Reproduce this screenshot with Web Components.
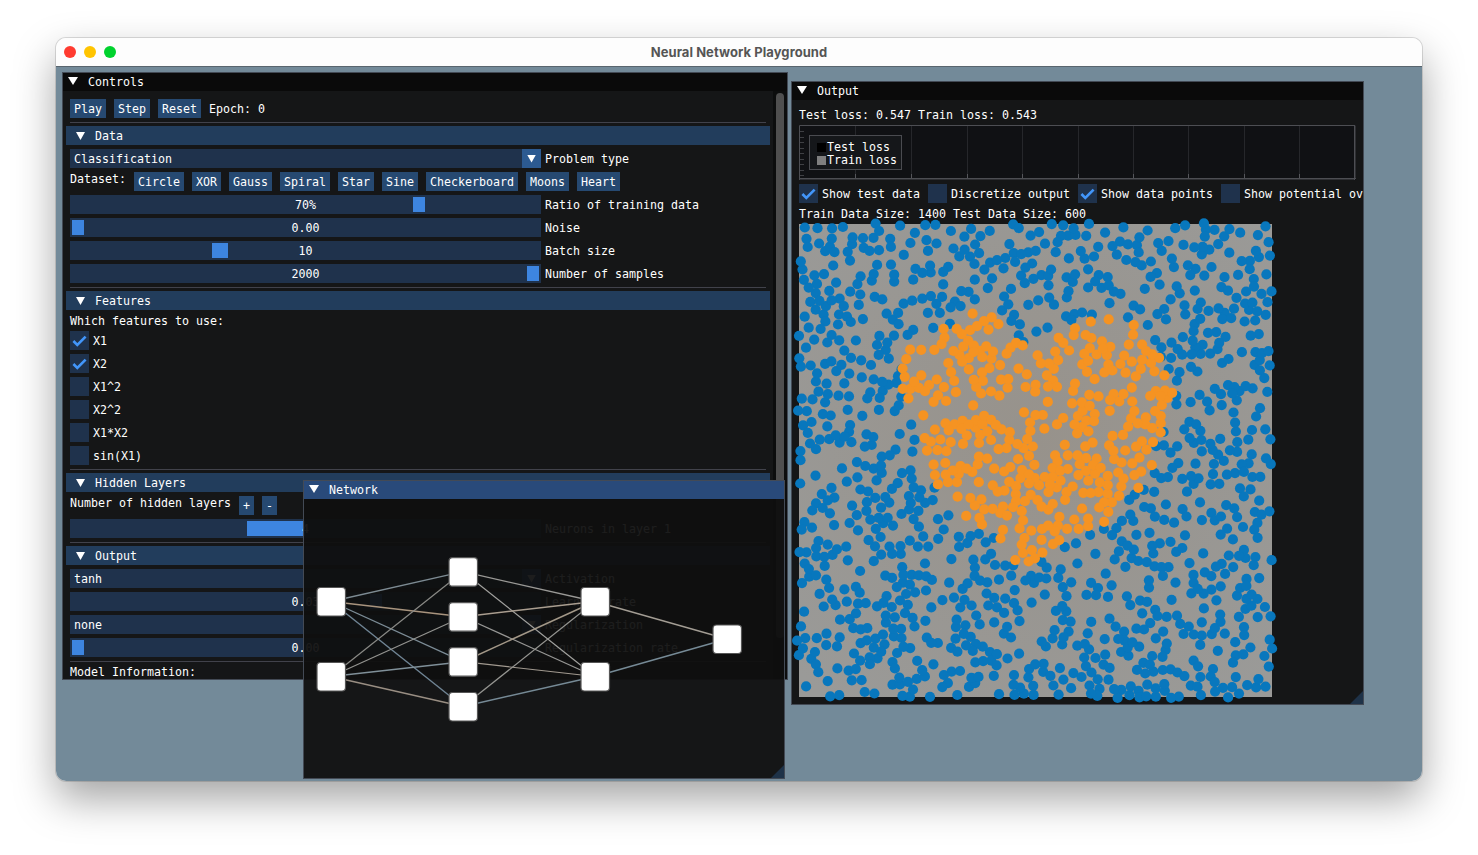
<!DOCTYPE html>
<html>
<head>
<meta charset="utf-8">
<title>Neural Network Playground</title>
<style>
  html, body { margin: 0; padding: 0; background: #fff; }
  body {
    height: 855px;
    overflow: hidden;
    padding: 38px 0 0 56px;
    box-sizing: border-box;
    font: 11.63px/13px "DejaVu Sans Mono", monospace;
    color: #fff;
  }
  /* plain text lines between the widgets: 13px tall, glyphs sit 1px low */
  span { display: block; flex: none; height: 13px; line-height: 15px; white-space: nowrap; }
  im-row[center] span { height: 19px; line-height: 21px; }
</style>
</head>
<body>
<mac-window title="Neural Network Playground">

  <im-window title="Controls" scroll style="left:6px;top:5px;width:726px;height:608px">
    <im-row center>
      <im-button>Play</im-button><im-button>Step</im-button><im-button>Reset</im-button><span>Epoch: 0</span>
    </im-row>
    <im-sep></im-sep>
    <im-header>Data</im-header>
    <im-combo value="Classification">Problem type</im-combo>
    <im-row>
      <span>Dataset:</span>
      <im-button>Circle</im-button><im-button>XOR</im-button><im-button>Gauss</im-button><im-button>Spiral</im-button><im-button>Star</im-button><im-button>Sine</im-button><im-button>Checkerboard</im-button><im-button>Moons</im-button><im-button>Heart</im-button>
    </im-row>
    <im-slider value="70%" grab="343" size="12">Ratio of training data</im-slider>
    <im-slider value="0.00" grab="2" size="12">Noise</im-slider>
    <im-slider value="10" grab="142" size="16">Batch size</im-slider>
    <im-slider value="2000" grab="457" size="12">Number of samples</im-slider>
    <im-sep></im-sep>
    <im-header>Features</im-header>
    <span>Which features to use:</span>
    <im-check checked>X1</im-check>
    <im-check checked>X2</im-check>
    <im-check>X1^2</im-check>
    <im-check>X2^2</im-check>
    <im-check>X1*X2</im-check>
    <im-check>sin(X1)</im-check>
    <im-sep></im-sep>
    <im-header>Hidden Layers</im-header>
    <im-row>
      <span>Number of hidden layers</span><im-button>+</im-button><im-button>-</im-button>
    </im-row>
    <im-slider value="4" grab="177" size="58">Neurons in layer 1</im-slider>
    <im-sep></im-sep>
    <im-header>Output</im-header>
    <im-combo value="tanh">Activation</im-combo>
    <im-slider value="0.03" grab="300" size="12">Learning rate</im-slider>
    <im-combo value="none">Regularization</im-combo>
    <im-slider value="0.00" grab="2" size="12">Regularization rate</im-slider>
    <im-sep></im-sep>
    <span>Model Information:</span>
  </im-window>

  <im-window title="Output" grip style="left:735px;top:14px;width:573px;height:624px">
    <span>Test loss: 0.547 Train loss: 0.543</span>
    <loss-plot></loss-plot>
    <im-row>
      <im-check checked>Show test data</im-check>
      <im-check>Discretize output</im-check>
      <im-check checked>Show data points</im-check>
      <im-check>Show potential overlay</im-check>
    </im-row>
    <span>Train Data Size: 1400 Test Data Size: 600</span>
    <scatter-view></scatter-view>
  </im-window>

  <im-window title="Network" active flush grip style="left:247px;top:413px;width:482px;height:299px">
    <network-graph></network-graph>
  </im-window>

</mac-window>

<script>
// ImGui dark theme colours, written out once so alpha blends like the real thing
const FRAME = 'rgba(41,74,122,.54)';
const BUTTON = 'rgba(66,150,250,.4)';
const HEADER = 'rgba(66,150,250,.31)';
const LINE = 'rgba(110,110,128,.5)';
const GRAB = 'rgb(61,133,224)';
const TRIANGLE = 'background:#fff;clip-path:polygon(0 0,100% 0,50% 100%);flex:none;';

class MacWindow extends HTMLElement {
  constructor() {
    super();
    this.attachShadow({mode: 'open'});
  }
  connectedCallback() {
    this.shadowRoot.innerHTML = `
      <style>
        :host {
          display: flex;
          flex-direction: column;
          width: 1366px;
          height: 743px;
          border-radius: 10px;
          overflow: hidden;
          box-shadow: 0 0 0 1px rgba(0,0,0,.13), 0 18px 42px rgba(0,0,0,.36);
        }
        .bar {
          flex: none;
          height: 28px;
          border-bottom: 1px solid #59656e;
          background: #fdfdfd;
          display: flex;
          align-items: center;
          justify-content: center;
          position: relative;
          font: bold 13px "Inter", "Liberation Sans", sans-serif;
          letter-spacing: .06px;
          color: #555;
        }
        .lights {
          position: absolute;
          left: 8px;
          top: 8px;
          display: flex;
          gap: 8px;
        }
        .lights i { width: 12px; height: 12px; border-radius: 50%; }
        .desk { flex: 1; position: relative; background: #738a99; }
      </style>
      <div class="bar">
        <div class="lights">
          <i style="background:#ff3b30"></i><i style="background:#ffc400"></i><i style="background:#00d22e"></i>
        </div>
        ${this.getAttribute('title')}
      </div>
      <div class="desk"><slot></slot></div>
    `;
  }
}

class ImWindow extends HTMLElement {
  constructor() {
    super();
    this.attachShadow({mode: 'open'});
  }
  connectedCallback() {
    const flush = this.hasAttribute('flush');
    this.shadowRoot.innerHTML = `
      <style>
        :host {
          position: absolute;
          box-sizing: border-box;
          display: flex;
          flex-direction: column;
          border: 1px solid #434a55;
          background: rgba(15,15,15,.94);
          overflow: hidden;
        }
        .title {
          flex: none;
          height: 18px;
          display: flex;
          align-items: center;
          gap: 10px;
          padding-left: 5px;
          background: ${this.hasAttribute('active') ? 'rgb(41,74,122)' : 'rgb(10,10,10)'};
        }
        .tri { width: 10px; height: 8px; margin-top: -2px; ${TRIANGLE} }
        .body {
          flex: 1;
          min-height: 0;
          overflow: hidden;
          display: flex;
          flex-direction: column;
          align-items: flex-start;
          gap: 4px;
          padding: ${flush ? '0' : '8px 0 0 7px'};
        }
        .track {
          position: absolute;
          right: 0;
          top: 18px;
          bottom: 0;
          width: 14px;
          background: rgba(5,5,5,.53);
        }
        .thumb {
          position: absolute;
          left: 3px;
          top: 2px;
          width: 8px;
          height: 545px;
          border-radius: 4px;
          background: rgb(79,79,79);
        }
        .grip {
          position: absolute;
          right: 0;
          bottom: 0;
          width: 13px;
          height: 13px;
          background: rgba(66,150,250,.22);
          clip-path: polygon(100% 0, 100% 100%, 0 100%);
        }
      </style>
      <div class="title"><i class="tri"></i><div>${this.getAttribute('title')}</div></div>
      <div class="body"><slot></slot></div>
      ${this.hasAttribute('scroll') ? '<div class="track"><div class="thumb"></div></div>' : ''}
      ${this.hasAttribute('grip') ? '<div class="grip"></div>' : ''}
    `;
  }
}

class ImRow extends HTMLElement {
  constructor() {
    super();
    this.attachShadow({mode: 'open'}).innerHTML = `
      <style>
        :host {
          display: flex;
          flex: none;
          gap: 8px;
          align-items: flex-start;
          white-space: nowrap;
        }
      </style>
      <slot></slot>
    `;
  }
}

class ImButton extends HTMLElement {
  constructor() {
    super();
    this.attachShadow({mode: 'open'}).innerHTML = `
      <style>
        :host {
          display: block;
          flex: none;
          height: 19px;
          line-height: 21px;
          padding: 0 4px;
          background: ${BUTTON};
        }
      </style>
      <slot></slot>
    `;
  }
}

class ImSep extends HTMLElement {
  constructor() {
    super();
    this.attachShadow({mode: 'open'}).innerHTML = `
      <style>
        :host {
          display: block;
          flex: none;
          width: 696px;
          height: 1px;
          margin-bottom: -1px;
          background: ${LINE};
        }
      </style>
    `;
  }
}

class ImHeader extends HTMLElement {
  constructor() {
    super();
    this.attachShadow({mode: 'open'}).innerHTML = `
      <style>
        :host {
          display: flex;
          flex: none;
          gap: 10px;
          box-sizing: border-box;
          width: 704px;
          height: 19px;
          line-height: 21px;
          margin-left: -4px;
          padding-left: 10px;
          background: ${HEADER};
        }
        .tri { width: 9px; height: 8px; margin-top: 6px; ${TRIANGLE} }
      </style>
      <i class="tri"></i><div><slot></slot></div>
    `;
  }
}

class ImCombo extends HTMLElement {
  constructor() {
    super();
    this.attachShadow({mode: 'open'});
  }
  connectedCallback() {
    this.shadowRoot.innerHTML = `
      <style>
        :host {
          display: flex;
          flex: none;
          gap: 4px;
          line-height: 21px;
          height: 19px;
          white-space: nowrap;
        }
        .box {
          width: 471px;
          height: 19px;
          display: flex;
          justify-content: space-between;
          box-sizing: border-box;
          padding-left: 4px;
          background: ${FRAME};
        }
        .arrow {
          width: 19px;
          height: 19px;
          display: flex;
          align-items: center;
          justify-content: center;
          background: ${BUTTON};
        }
        .tri { width: 9px; height: 8px; ${TRIANGLE} }
      </style>
      <div class="box">
        <div>${this.getAttribute('value')}</div>
        <div class="arrow"><i class="tri"></i></div>
      </div>
      <div><slot></slot></div>
    `;
  }
}

class ImSlider extends HTMLElement {
  constructor() {
    super();
    this.attachShadow({mode: 'open'});
  }
  connectedCallback() {
    this.shadowRoot.innerHTML = `
      <style>
        :host {
          display: flex;
          flex: none;
          gap: 4px;
          height: 19px;
          line-height: 21px;
          white-space: nowrap;
        }
        .box {
          position: relative;
          width: 471px;
          height: 19px;
          text-align: center;
          background: ${FRAME};
        }
        .grab {
          position: absolute;
          top: 2px;
          height: 15px;
          background: ${GRAB};
        }
        .val { position: relative; }
      </style>
      <div class="box">
        <div class="grab" style="left:${this.getAttribute('grab')}px;width:${this.getAttribute('size')}px"></div>
        <div class="val">${this.getAttribute('value')}</div>
      </div>
      <div><slot></slot></div>
    `;
  }
}

class ImCheck extends HTMLElement {
  constructor() {
    super();
    this.attachShadow({mode: 'open'});
  }
  connectedCallback() {
    const mark = this.hasAttribute('checked')
      ? '<svg width="19" height="19" viewBox="0 0 19 19"><path d="M3.4 10 L7.3 14 L15.6 5.7" fill="none" stroke="#4296fa" stroke-width="2.6"/></svg>'
      : '';
    this.shadowRoot.innerHTML = `
      <style>
        :host {
          display: flex;
          flex: none;
          gap: 4px;
          height: 19px;
          line-height: 21px;
          white-space: nowrap;
        }
        .box { width: 19px; height: 19px; flex: none; background: ${FRAME}; }
        svg { display: block; }
      </style>
      <div class="box">${mark}</div>
      <div><slot></slot></div>
    `;
  }
}

class LossPlot extends HTMLElement {
  constructor() {
    super();
    this.attachShadow({mode: 'open'});
  }
  connectedCallback() {
    const w = 557, h = 55;
    let lines = '';
    [56, 112, 168, 223, 279, 334, 389, 445, 500].forEach(x => {
      lines += `<path d="M${x + .5} 1V${h - 6}" stroke="#26272b"/>`;
      lines += `<path d="M${x + .5} ${h - 6}V${h - 2}" stroke="#55565b"/>`;
    });
    for (let y = 6; y < h - 2; y += 5.5) {
      lines += `<path d="M1 ${Math.round(y) + .5}H5" stroke="#3f4044"/>`;
    }
    this.shadowRoot.innerHTML = `
      <style>
        :host {
          display: block;
          position: relative;
          flex: none;
          width: ${w}px;
          height: ${h}px;
          background: #101114;
        }
        svg { display: block; }
        .legend {
          position: absolute;
          left: 10px;
          top: 10px;
          box-sizing: border-box;
          width: 93px;
          height: 35px;
          padding: 5px 0 0 7px;
          border: 1px solid #4a4b50;
          background: #15171a;
        }
        .legend div { display: flex; gap: 1px; align-items: center; height: 13px; }
        .legend i { width: 9px; height: 9px; flex: none; }
      </style>
      <svg width="${w}" height="${h}">
        ${lines}
        <path d="M.5 ${h}V.5H${w - 1}V${h - 1}H0" fill="none" stroke="#4d4e53"/>
        <path d="M0 ${h - 1.5}H${w}M${w - 1.5} 0V${h}" stroke="#4d4e53"/>
      </svg>
      <div class="legend">
        <div><i style="background:#000"></i><b style="font-weight:normal">Test loss</b></div>
        <div><i style="background:#7f7f7f"></i><b style="font-weight:normal">Train loss</b></div>
      </div>
    `;
  }
}

// outline of the orange cluster, in page pixels as read off the screenshot
const BLOB = [[898,385],[905,358],[913,343],[932,328],[950,328],[968,313],[992,314],[1010,322],[1022,345],[1035,350],[1055,322],[1075,325],[1095,314],[1120,312],[1130,320],[1150,335],[1166,368],[1174,400],[1166,425],[1153,445],[1153,465],[1142,485],[1120,505],[1108,525],[1075,535],[1055,550],[1035,562],[1012,562],[1005,545],[990,535],[960,520],[952,503],[953,490],[925,480],[928,460],[915,440],[910,412]]
  .map(([x, y]) => [x - 799, y - 224]);

function inBlob(x, y) {
  let inside = false;
  for (let i = 0, j = BLOB.length - 1; i < BLOB.length; j = i++) {
    const [xi, yi] = BLOB[i], [xj, yj] = BLOB[j];
    if ((yi > y) !== (yj > y) && x < (xj - xi) * (y - yi) / (yj - yi) + xi) inside = !inside;
  }
  return inside;
}

class ScatterView extends HTMLElement {
  constructor() {
    super();
    this.attachShadow({mode: 'open'});
  }
  connectedCallback() {
    const size = 473;
    const BLUE = 1040, ORANGE = 350;
    let seed = 20240611;
    const rnd = () => {
      seed = (seed + 0x6D2B79F5) | 0;
      let t = Math.imul(seed ^ (seed >>> 15), 1 | seed);
      t = (t + Math.imul(t ^ (t >>> 7), 61 | t)) ^ t;
      return ((t ^ (t >>> 14)) >>> 0) / 4294967296;
    };
    const blue = [], orange = [];
    // some points chain off an earlier one, the reference has short runs of dots
    const pick = list => {
      if (list.length && rnd() < .16) {
        const p = list[Math.floor(rnd() * list.length)];
        const a = rnd() * Math.PI * 2, d = 7 + rnd() * 4;
        return [p[0] + Math.cos(a) * d, p[1] + Math.sin(a) * d];
      }
      return [rnd() * (size + 2) - 1, rnd() * (size + 2) - 1];
    };
    let tries = 0;
    while ((blue.length < BLUE || orange.length < ORANGE) && tries++ < 200000) {
      const isOrange = orange.length < ORANGE && (blue.length >= BLUE || rnd() < .3);
      const list = isOrange ? orange : blue;
      const [x, y] = pick(list);
      if (x < -2 || y < -2 || x > size + 2 || y > size + 2) continue;
      if (inBlob(x, y) !== isOrange) continue;
      if (list.some(p => (p[0] - x) ** 2 + (p[1] - y) ** 2 < 42)) continue;
      list.push([x, y]);
    }
    const dot = colour => p => `<circle cx="${p[0].toFixed(1)}" cy="${p[1].toFixed(1)}" r="5.1" fill="${colour}"/>`;
    const dots = blue.map(dot('#0877bd')).join('') + orange.map(dot('#f59322')).join('');
    this.shadowRoot.innerHTML = `
      <style>
        :host { display: block; flex: none; width: ${size}px; height: ${size}px; }
        svg { display: block; overflow: visible; }
      </style>
      <svg width="${size}" height="${size}">
        <defs>
          <radialGradient id="pot" cx="50%" cy="46%" r="70%">
            <stop offset="0" stop-color="#97928b"/>
            <stop offset="1" stop-color="#9a9a98"/>
          </radialGradient>
        </defs>
        <rect width="${size}" height="${size}" fill="url(#pot)"/>
        ${dots}
      </svg>
    `;
  }
}

class NetworkGraph extends HTMLElement {
  constructor() {
    super();
    this.attachShadow({mode: 'open'});
  }
  connectedCallback() {
    // node centres, relative to the window body
    const nodes = {
      a1: [27, 102.5], a2: [27, 177.5],
      b1: [159, 72.7], b2: [159, 117.7], b3: [159, 162.7], b4: [159, 207.5],
      c1: [291, 102.5], c2: [291, 177.5],
      d1: [423, 140]
    };
    const edges = [
      ['a1', 'b1', '#7d8b93', 1.3], ['a1', 'b2', '#a8947e', 1.5], ['a1', 'b3', '#7c8c96', 1.3], ['a1', 'b4', '#708595', 1.4],
      ['a2', 'b1', '#8a8a86', 1.2], ['a2', 'b2', '#949490', 1.2], ['a2', 'b3', '#809099', 1.4], ['a2', 'b4', '#998e83', 1.3],
      ['b1', 'c1', '#9a9996', 1.3], ['b1', 'c2', '#a3a3a0', 1.2], ['b2', 'c1', '#aa9e90', 1.5], ['b2', 'c2', '#979795', 1.2],
      ['b3', 'c1', '#a39888', 1.5], ['b3', 'c2', '#a29a90', 1.2], ['b4', 'c1', '#969692', 1.2], ['b4', 'c2', '#768a96', 1.5],
      ['c1', 'd1', '#a39d94', 1.3], ['c2', 'd1', '#768a96', 1.5]
    ];
    const lines = edges.map(([from, to, colour, width]) =>
      `<line x1="${nodes[from][0]}" y1="${nodes[from][1]}" x2="${nodes[to][0]}" y2="${nodes[to][1]}" stroke="${colour}" stroke-width="${width}"/>`
    ).join('');
    const boxes = Object.values(nodes).map(([x, y]) =>
      `<rect x="${x - 14}" y="${y - 14}" width="28.5" height="28.5" rx="3.5" fill="#fff" stroke="#565656" stroke-width="1.2"/>`
    ).join('');
    this.shadowRoot.innerHTML = `
      <style>
        :host { display: block; width: 480px; height: 280px; flex: none; }
        svg { display: block; }
      </style>
      <svg width="480" height="280">${lines}${boxes}</svg>
    `;
  }
}

customElements.define('mac-window', MacWindow);
customElements.define('im-window', ImWindow);
customElements.define('im-row', ImRow);
customElements.define('im-button', ImButton);
customElements.define('im-sep', ImSep);
customElements.define('im-header', ImHeader);
customElements.define('im-combo', ImCombo);
customElements.define('im-slider', ImSlider);
customElements.define('im-check', ImCheck);
customElements.define('loss-plot', LossPlot);
customElements.define('scatter-view', ScatterView);
customElements.define('network-graph', NetworkGraph);
</script>
</body>
</html>
